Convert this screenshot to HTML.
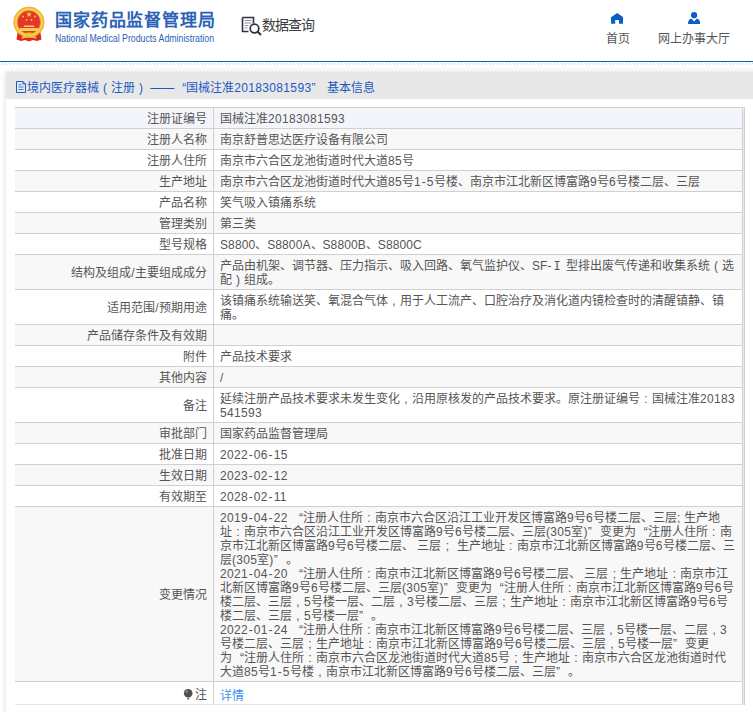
<!DOCTYPE html>
<html lang="zh-CN">
<head>
<meta charset="utf-8">
<style>
html,body{margin:0;padding:0;background:#fff;}
body{width:753px;height:712px;overflow:hidden;position:relative;font-family:"Liberation Sans",sans-serif;color:#555;font-size:12px;}
.hdr{position:absolute;left:0;top:0;width:753px;height:61px;background:#fff;}
.blue{position:absolute;left:0;top:61px;width:753px;height:1px;background:#0d5dc2;}
.hatch{position:absolute;left:0;top:63px;width:753px;height:2px;}
.emb{position:absolute;left:8px;top:2px;width:44px;height:44px;}
.t1{position:absolute;left:55px;top:11px;font-size:17px;line-height:20px;font-weight:bold;color:#2b62b5;white-space:nowrap;letter-spacing:0.85px;}
.t2{position:absolute;left:55px;top:32.5px;font-size:10px;line-height:12px;color:#2b62b5;white-space:nowrap;transform:scaleX(0.875);transform-origin:0 0;}
.sq{position:absolute;left:241px;top:16px;width:22px;height:20px;}
.sqt{position:absolute;left:262px;top:14px;font-size:14px;letter-spacing:-1.1px;color:#3a3a3a;white-space:nowrap;}
.nav{position:absolute;top:10px;line-height:14px;text-align:center;font-size:12px;color:#555;white-space:nowrap;}
.card{position:absolute;left:6px;top:72px;width:800px;height:700px;background:#fff;box-shadow:0 0 6px rgba(0,0,0,0.14);}
.edge{position:absolute;left:737px;top:35px;width:1px;height:598px;background:#e8ebf1;border-right:1px solid #cfcfd1;}
.ch{position:absolute;left:0;top:0;width:800px;height:27px;background:#e8e8e8;}
.ctitle{position:absolute;left:21px;top:9px;color:#1d58c2;font-size:12px;white-space:nowrap;line-height:14px;}
table{position:absolute;left:9px;top:35px;width:728px;border-collapse:collapse;table-layout:fixed;}
td{border-top:1px solid #d2cfd1;border-bottom:1px solid #d2cfd1;line-height:14px;padding:4px 6px 2px 6px;vertical-align:middle;font-size:12px;color:#555;}
td.l{width:186px;text-align:right;border-right:1px solid #d2cfd1;}
td.v{text-align:left;border-right:1px solid #d2cfd1;}
tr:nth-child(even) td{background:#f8f8f8;}
tr.last td{padding-top:5px;padding-bottom:3px;border-bottom-color:#e0e4ec;}
tr.hov td{background:#f4f5fa;}
.fw{display:inline-block;width:12px;text-align:center;}
.n{letter-spacing:0.33px;}
.n.u{letter-spacing:0.1px;}
.h{margin:0 0.75px;}
.rn{line-height:0;margin:0 1.9px;font-family:"Liberation Mono",monospace;font-size:12px;}
.gap{display:inline-block;width:3.3px;}
.q{display:inline-block;width:12px;text-align:right;}
.qr{display:inline-block;width:12px;text-align:left;}
a{color:#3d8ef0;text-decoration:none;}
</style>
</head>
<body>
<div class="hdr">
  <svg class="emb" viewBox="0 0 44 44">
    <path d="M10 28 L8.5 37.5 L13 39 L17 38 L21 39.5 L25 38 L29 39 L33.5 37.5 L32 28 Z" fill="#dc2a20"/>
    <circle cx="20.9" cy="20.2" r="15.2" fill="#f3c43e" stroke="#eaa72a" stroke-width="0.8"/>
    <circle cx="20.9" cy="20.2" r="13.6" fill="#f7d152"/>
    <circle cx="20.9" cy="20.2" r="11.6" fill="#e4362a" stroke="#e9a62c" stroke-width="0.6"/>
    <path d="M21 9.2l0.75 2.2h2.3l-1.85 1.35 0.7 2.2-1.9-1.35-1.9 1.35 0.7-2.2-1.85-1.35h2.3z" fill="#f5cf45"/>
    <circle cx="15.1" cy="14.5" r="0.9" fill="#f5cf45"/>
    <circle cx="26.9" cy="14.5" r="0.9" fill="#f5cf45"/>
    <circle cx="18.5" cy="17.9" r="0.9" fill="#f5cf45"/>
    <circle cx="23.5" cy="17.9" r="0.9" fill="#f5cf45"/>
    <path d="M16.5 23.5 L25.5 23.5 L26.5 25 L15.5 25 Z" fill="#f5d262"/>
    <path d="M12 26h18v3h-18z" fill="#f5d050"/>
    <path d="M13.5 35 Q21 31.5 28.5 35 L28 36.8 Q21 33.8 14 36.8 Z" fill="#f2c445"/>
    <path d="M18.5 30.5h5v2.5h-5z" fill="#f2c445"/>
  </svg>
  <div class="t1">国家药品监督管理局</div>
  <div class="t2">National Medical Products Administration</div>
  <svg class="sq" viewBox="0 0 22 20">
    <path d="M1.5 1.5h11v6 M1.5 1.5v14h6" fill="none" stroke="#2f3042" stroke-width="1.6"/>
    <path d="M3.5 4.5h7 M3.5 7h7 M3.5 9.5h4 M3.5 12h3" stroke="#8a8b96" stroke-width="1"/>
    <circle cx="13.5" cy="12.5" r="4.3" fill="none" stroke="#2f3042" stroke-width="1.7"/>
    <path d="M16.5 15.5l3.5 3.5" stroke="#2f3042" stroke-width="2"/>
  </svg>
  <div class="sqt">数据查询</div>
  <svg style="position:absolute;left:611px;top:13px" width="12.2" height="11" viewBox="0 0 12.2 11"><path d="M6.2 0L12.2 4.2V10.8H8V7H4.2V10.8H0V4.2Z" fill="#0a5fc6"/></svg>
  <svg style="position:absolute;left:688px;top:12px" width="12.2" height="12" viewBox="0 0 12.2 12"><circle cx="6.1" cy="3.2" r="3.1" fill="#0a5fc6"/><path d="M0 11.9C0 8.5 1.5 6.9 3.6 6.8L6.1 9.5L8.6 6.8C10.7 6.9 12.2 8.5 12.2 11.9Z" fill="#0a5fc6"/></svg>
  <div class="nav" style="left:604px;width:28px;top:30px;"><span style="position:relative;top:1.5px">首页</span></div>
  <div class="nav" style="left:656px;width:75px;top:30px;"><span style="position:relative;top:1.5px">网上办事大厅</span></div>
</div>
<div class="blue"></div>
<svg class="hatch" width="753" height="2"><defs><pattern id="hp" width="3" height="2" patternUnits="userSpaceOnUse"><rect x="2" y="0" width="1" height="1" fill="#d6d6d6"/><rect x="1" y="1" width="1" height="1" fill="#dcdcdc"/></pattern></defs><rect width="753" height="2" fill="url(#hp)"/></svg>
<div class="card">
  <div class="edge"></div>
  <div class="ch">
    <svg style="position:absolute;left:10px;top:8.5px" width="11" height="12" viewBox="0 0 11 12"><path d="M0.5 0.5h6.5l2.5 2.5v8.5h-9z M7 0.5v2.5h2.5" fill="none" stroke="#1a5ccc" stroke-width="1"/><path d="M2.5 3.8h3 M2.5 6h5 M2.5 8.5h5" stroke="#4a78cc" stroke-width="1"/></svg>
    <div class="ctitle">境内医疗器械<span class="fw">(</span>注册<span class="fw">)</span> ——<span class="q">“</span>国械注准<span class="n">20183081593</span><span class="qr">”</span> 基本信息</div>
  </div>
  <table>
<tr class="hov"><td class="l">注册证编号</td><td class="v" style="white-space:nowrap">国械注准<span class="n">20183081593</span></td></tr>
<tr><td class="l">注册人名称</td><td class="v" style="white-space:nowrap">南京舒普思达医疗设备有限公司</td></tr>
<tr><td class="l">注册人住所</td><td class="v" style="white-space:nowrap">南京市六合区龙池街道时代大道<span class="n">85</span>号</td></tr>
<tr><td class="l">生产地址</td><td class="v" style="white-space:nowrap">南京市六合区龙池街道时代大道<span class="n">85</span>号<span class="n">1<span class="h">-</span>5</span>号楼、南京市江北新区博富路<span class="n">9</span>号<span class="n">6</span>号楼二层、三层</td></tr>
<tr><td class="l">产品名称</td><td class="v" style="white-space:nowrap">笑气吸入镇痛系统</td></tr>
<tr><td class="l">管理类别</td><td class="v" style="white-space:nowrap">第三类</td></tr>
<tr><td class="l">型号规格</td><td class="v" style="white-space:nowrap"><span class="n u">S8800</span>、<span class="n u">S8800A</span>、<span class="n u">S8800B</span>、<span class="n u">S8800C</span></td></tr>
<tr><td class="l">结构及组成<span class="n">/</span>主要组成成分</td><td class="v" style="white-space:nowrap">产品由机架、调节器、压力指示、吸入回路、氧气监护仪、<span class="n u">SF-</span><span class="rn">I</span> 型排出废气传递和收集系统<span class="fw">(</span>选<br>配<span class="fw">)</span>组成。</td></tr>
<tr><td class="l">适用范围<span class="n">/</span>预期用途</td><td class="v" style="white-space:nowrap">该镇痛系统输送笑、氧混合气体<span class="fw">,</span>用于人工流产、口腔治疗及消化道内镜检查时的清醒镇静、镇<br>痛。</td></tr>
<tr><td class="l">产品储存条件及有效期</td><td class="v" style="white-space:nowrap"></td></tr>
<tr><td class="l">附件</td><td class="v" style="white-space:nowrap">产品技术要求</td></tr>
<tr><td class="l">其他内容</td><td class="v" style="white-space:nowrap"><span class="n">/</span></td></tr>
<tr><td class="l">备注</td><td class="v" style="white-space:nowrap">延续注册产品技术要求未发生变化<span class="fw">,</span>沿用原核发的产品技术要求。原注册证编号<span class="fw">:</span>国械注准<span class="n">20183</span><br><span class="n">541593</span></td></tr>
<tr><td class="l">审批部门</td><td class="v" style="white-space:nowrap">国家药品监督管理局</td></tr>
<tr><td class="l">批准日期</td><td class="v" style="white-space:nowrap"><span class="n">2022<span class="h">-</span>06<span class="h">-</span>15</span></td></tr>
<tr><td class="l">生效日期</td><td class="v" style="white-space:nowrap"><span class="n">2023<span class="h">-</span>02<span class="h">-</span>12</span></td></tr>
<tr><td class="l">有效期至</td><td class="v" style="white-space:nowrap"><span class="n">2028<span class="h">-</span>02<span class="h">-</span>11</span></td></tr>
<tr><td class="l">变更情况</td><td class="v" style="white-space:nowrap"><span class="n">2019<span class="h">-</span>04<span class="h">-</span>22</span><span class="gap"></span><span class="q">“</span>注册人住所<span class="fw">:</span>南京市六合区沿江工业开发区博富路<span class="n">9</span>号<span class="n">6</span>号楼二层、三层<span class="n">;</span> 生产地<br>址<span class="fw">:</span>南京市六合区沿江工业开发区博富路<span class="n">9</span>号<span class="n">6</span>号楼二层、三层<span class="n">(305</span>室<span class="n">)</span><span class="qr">”</span>变更为<span class="q">“</span>注册人住所<span class="fw">:</span>南<br>京市江北新区博富路<span class="n">9</span>号<span class="n">6</span>号楼二层、 三层<span class="fw">;</span> 生产地址<span class="fw">:</span>南京市江北新区博富路<span class="n">9</span>号<span class="n">6</span>号楼二层、三<br>层<span class="n">(305</span>室<span class="n">)</span><span class="qr">”</span>。<br><span class="n">2021<span class="h">-</span>04<span class="h">-</span>20</span><span class="gap"></span><span class="q">“</span>注册人住所<span class="fw">:</span>南京市江北新区博富路<span class="n">9</span>号<span class="n">6</span>号楼二层、 三层<span class="fw">;</span>生产地址<span class="fw">:</span>南京市江<br>北新区博富路<span class="n">9</span>号<span class="n">6</span>号楼二层、三层<span class="n">(305</span>室<span class="n">)</span><span class="qr">”</span>变更为<span class="q">“</span>注册人住所<span class="fw">:</span>南京市江北新区博富路<span class="n">9</span>号<span class="n">6</span>号<br>楼二层、三层<span class="fw">,</span><span class="n">5</span>号楼一层、二层<span class="fw">,</span><span class="n">3</span>号楼二层、三层<span class="fw">;</span>生产地址<span class="fw">:</span>南京市江北新区博富路<span class="n">9</span>号<span class="n">6</span>号<br>楼二层、三层<span class="fw">,</span><span class="n">5</span>号楼一层<span class="qr">”</span>。<br><span class="n">2022<span class="h">-</span>01<span class="h">-</span>24</span><span class="gap"></span><span class="q">“</span>注册人住所<span class="fw">:</span>南京市江北新区博富路<span class="n">9</span>号<span class="n">6</span>号楼二层、三层<span class="fw">,</span><span class="n">5</span>号楼一层、二层<span class="fw">,</span><span class="n">3</span><br>号楼二层、三层<span class="fw">;</span>生产地址<span class="fw">:</span>南京市江北新区博富路<span class="n">9</span>号<span class="n">6</span>号楼二层、三层<span class="fw">,</span><span class="n">5</span>号楼一层<span class="qr">”</span>变更<br>为<span class="q">“</span>注册人住所<span class="fw">:</span>南京市六合区龙池街道时代大道<span class="n">85</span>号<span class="fw">;</span>生产地址<span class="fw">:</span>南京市六合区龙池街道时代<br>大道<span class="n">85</span>号<span class="n">1<span class="h">-</span>5</span>号楼<span class="fw">,</span>南京市江北新区博富路<span class="n">9</span>号<span class="n">6</span>号楼二层、三层<span class="qr">”</span>。</td></tr>
<tr class="last"><td class="l"><svg width="11" height="13" viewBox="0 0 11 13" style="vertical-align:-3px;margin-right:1px"><circle cx="5.2" cy="5.2" r="4.3" fill="#4f4f55"/><circle cx="3.8" cy="3.8" r="1.2" fill="#8a8a90"/><path d="M4.2 9.8h2v1.6h-2z" fill="#666"/></svg><span style="position:relative;top:1px">注</span></td><td class="v"><a style="position:relative;top:2px">详情</a></td></tr>
</table>
</div>
</body>
</html>
